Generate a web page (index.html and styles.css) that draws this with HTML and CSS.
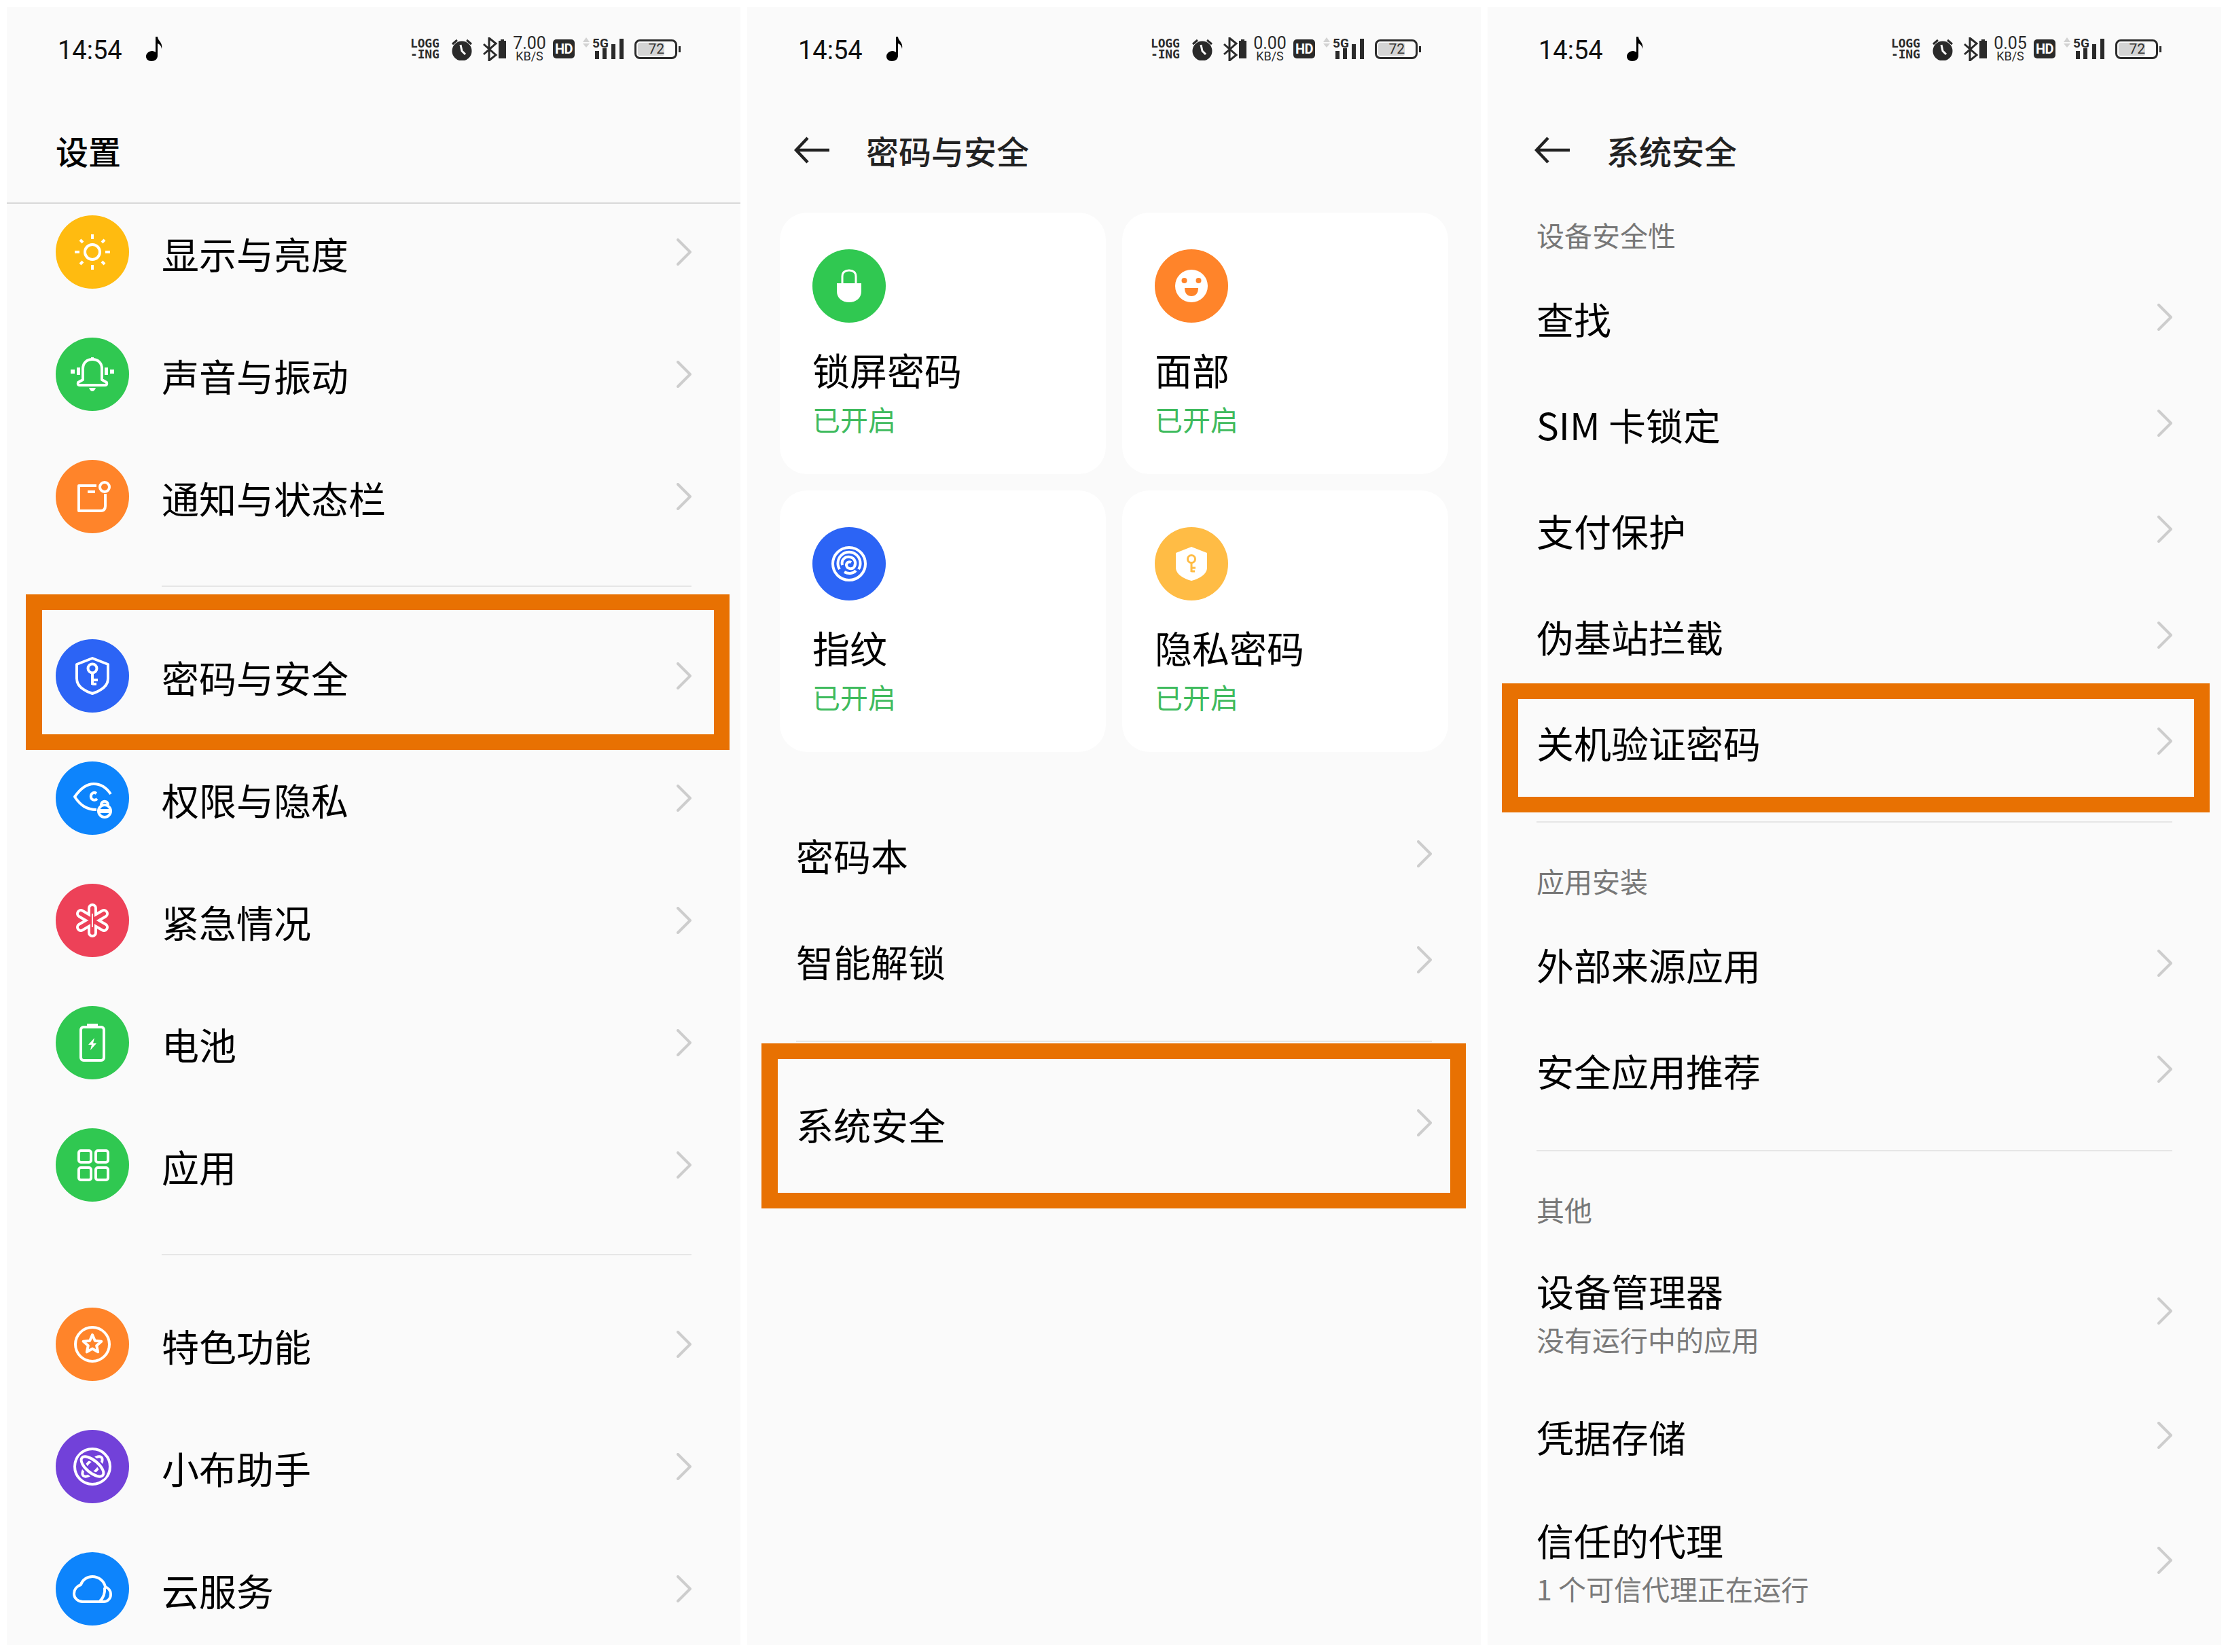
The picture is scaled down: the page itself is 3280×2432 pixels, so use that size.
FILE: index.html
```html
<!DOCTYPE html>
<html lang="zh-CN">
<head>
<meta charset="utf-8">
<title>设置</title>
<link rel="stylesheet" href="styles.css">
</head>
<body>
<svg class="sprite" aria-hidden="true">
  <symbol id="chev" viewBox="0 0 22 40"><path class="s-chev" d="M2 2 L20 20 L2 38"/></symbol>
  <symbol id="back" viewBox="0 0 52 40"><path class="s-back" d="M20 2 L3 20 L20 38 M3 20 H52"/></symbol>
  <symbol id="note" viewBox="0 0 26 36"><path class="f-black" d="M15 0 H18 C18 6 26 8 24 18 C23 13 21 11 18 10 V28 C18 33 14 36 9 36 C4 36 1 33 1 29 C1 25 5 21 10 21 C12 21 14 22 15 23 Z"/></symbol>
  <symbol id="alarm" viewBox="0 0 32 34"><circle class="f-dark" cx="16" cy="20" r="14.5"/><path class="s-dark" d="M2 10 L9 4 M30 10 L23 4"/><path class="s-white3" d="M14 11 L16 20 L21 25"/></symbol>
  <symbol id="bt" viewBox="0 0 34 35"><path class="s-dark" d="M1 10 L19 26 L9 34 V1 L19 9 L1 25"/><path class="f-dark" d="M26 3 H31 V5 H34 V31 H23 V5 H26 Z"/></symbol>
  <symbol id="sun" viewBox="0 0 108 108"><circle class="s-w" cx="54" cy="54" r="11"/><path class="s-w" d="M54 28 V35 M54 73 V80 M28 54 H35 M73 54 H80 M36 36 L40 40 M72 36 L68 40 M36 72 L40 68 M72 72 L68 68"/></symbol>
  <symbol id="bell" viewBox="0 0 108 108"><path class="s-w" d="M40 62 V46 C40 37 46 32 54 32 C62 32 68 37 68 46 V62 L75 66 Q76 70 73 70 H35 Q32 70 33 66 Z M54 29 V32"/><path class="f-w" d="M49 74 H59 Q57 79 54 79 Q51 79 49 74 Z M22 47 H28 V53 H22 Z M80 47 H86 V53 H80 Z M31 44 H36 V55 H31 Z M72 44 H77 V55 H72 Z"/></symbol>
  <symbol id="notif" viewBox="0 0 108 108"><path class="s-w" d="M60 38 H34 V75 H66 Q73 75 73 68 V50 M47 47 H58"/><circle class="s-w" cx="72" cy="40" r="7"/></symbol>
  <symbol id="shield" viewBox="0 0 108 108"><path class="s-w" d="M54 28 L77 37 V58 C77 69 66 76 54 80 C42 76 31 69 31 58 V37 Z"/><circle class="s-w" cx="54" cy="43" r="6.5"/><path class="s-w" d="M54 50 V67 M54 60 H62 M54 66 H60"/></symbol>
  <symbol id="eye" viewBox="0 0 108 108"><path class="s-w" d="M60 71 C45 71 36 64 28 52 C37 39 46 33 56 33 C67 33 75 39 81 48"/><path class="s-w" d="M60 47 C55 44 51 48 52 53 C53 57 58 58 61 55"/><circle class="s-w" cx="72" cy="73" r="9"/><path class="f-w" d="M65 70 H80 V76 H65 Z"/><path class="s-w" d="M67 64 C67 57 77 57 77 64"/></symbol>
  <symbol id="aster" viewBox="0 0 108 108"><path class="s-w14" d="M54 36 V72 M37 44 L71 64 M71 44 L37 64"/><path class="s-red6" d="M54 36 V72 M37 44 L71 64 M71 44 L37 64"/><path class="s-w3" d="M54 44 V64"/></symbol>
  <symbol id="batt" viewBox="0 0 108 108"><rect class="s-w" x="37" y="31" width="34" height="49" rx="4"/><path class="s-w" d="M46 28 H62"/><path class="f-w" d="M57 47 L48 57 H53 L51 65 L60 55 H55 Z"/></symbol>
  <symbol id="grid" viewBox="0 0 108 108"><rect class="s-w" x="34" y="33" width="18" height="17" rx="3"/><rect class="s-w" x="59" y="33" width="18" height="17" rx="3"/><rect class="s-w" x="34" y="58" width="18" height="18" rx="3"/><rect class="s-w" x="59" y="58" width="18" height="18" rx="3"/></symbol>
  <symbol id="star" viewBox="0 0 108 108"><circle class="s-w" cx="54" cy="54" r="25"/><path class="s-w" d="M54 40 L57.8 48.7 L67.3 49.7 L60.2 56 L62.2 65.3 L54 60.5 L45.8 65.3 L47.8 56 L40.7 49.7 L50.2 48.7 Z"/></symbol>
  <symbol id="orbit" viewBox="0 0 108 108"><circle class="s-w" cx="54" cy="54" r="26"/><ellipse class="s-w" cx="54" cy="54" rx="19" ry="8" transform="rotate(-45 54 54)"/><ellipse class="s-under" cx="54" cy="54" rx="20" ry="9" transform="rotate(40 54 54)"/><ellipse class="s-w" cx="54" cy="54" rx="20" ry="9" transform="rotate(40 54 54)"/></symbol>
  <symbol id="cloud" viewBox="0 0 108 108"><path class="s-w" d="M40 73 H70 C77 73 81 68 81 62 C81 57 78 53 73 51 C71 42 63 36 54 36 C46 36 39 41 37 48 C31 50 27 55 27 61 C27 68 33 73 40 73 Z M72 52 C73 60 70 68 65 72"/></symbol>
  <symbol id="lock" viewBox="0 0 108 108"><path class="f-w" d="M36 50 H72 V62 C72 72 64 78 54 78 C44 78 36 72 36 62 Z"/><path class="s-w3b" d="M44 50 V40 C44 34 48 31 54 31 C60 31 64 34 64 40 V50"/></symbol>
  <symbol id="face" viewBox="0 0 108 108"><circle class="f-w" cx="54" cy="54" r="24"/><circle class="f-orange" cx="43.5" cy="46" r="4"/><circle class="f-orange" cx="64.5" cy="46" r="4"/><path class="f-orange" d="M44 57 H64 C64 65 60 69 54 69 C48 69 44 65 44 57 Z"/></symbol>
  <symbol id="finger" viewBox="0 0 108 108"><circle class="s-w" cx="54" cy="54" r="24"/><path class="s-w" d="M40 62 A16.500 16.500 0 1 1 68 62 M47 66 C52 69 60 69 64 64"/><path class="s-w" d="M44 56 C42 48 48 43 55 44 C62 45 65 52 62 58 C59 63 51 62 50 56 C50 52 54 50 57 52"/></symbol>
  <symbol id="keyshield" viewBox="0 0 108 108"><path class="f-w" d="M54 29 L77 38 V60 C77 69 66 76 54 79 C42 76 31 69 31 60 V38 Z"/><circle class="s-amber" cx="54" cy="47" r="5.500"/><path class="s-amber" d="M54 52 V66 M54 60 H60 M54 65 H59"/></symbol>
</svg>

<main class="screens">

  <section class="panel">
    <div class="status">
      <span class="time">14:54</span>
      <svg class="note"><use href="#note"/></svg>
      <div class="sys">
        <span class="logging">LOGG<br>-ING</span>
        <svg class="alarm"><use href="#alarm"/></svg>
        <svg class="bt"><use href="#bt"/></svg>
        <span class="speed"><b>7.00</b><i>KB/S</i></span>
        <span class="hd">HD</span>
        <svg class="signal" viewBox="0 -5 60 44">
          <path class="f-grey" d="M0 7 L5 0 L10 7 Z M0 9 H10 L5 15 Z"/>
          <text class="five-g" x="14" y="15">5G</text>
          <rect class="f-dark" x="18" y="20" width="6" height="12"/>
          <rect class="f-dark" x="29" y="16" width="6" height="16"/>
          <rect class="f-dark" x="42" y="10" width="6" height="22"/>
          <rect class="f-dark" x="54" y="2" width="6" height="30"/>
        </svg>
        <span class="battery"><span class="level">72</span></span>
      </div>
    </div>
    <header class="titlebar"><h1 class="title root">设置</h1></header>
    <div class="list-clip">
      <div class="list">
        <div class="row"><span class="ic yellow"><svg><use href="#sun"/></svg></span><span class="label">显示与亮度</span><svg class="chev"><use href="#chev"/></svg></div>
        <div class="row"><span class="ic green"><svg><use href="#bell"/></svg></span><span class="label">声音与振动</span><svg class="chev"><use href="#chev"/></svg></div>
        <div class="row"><span class="ic orange"><svg><use href="#notif"/></svg></span><span class="label">通知与状态栏</span><svg class="chev"><use href="#chev"/></svg></div>
        <div class="sep sep-indent"></div>
        <div class="row"><span class="ic blue"><svg><use href="#shield"/></svg></span><span class="label">密码与安全</span><svg class="chev"><use href="#chev"/></svg><span class="hl hl-settings"></span></div>
        <div class="row"><span class="ic sky"><svg><use href="#eye"/></svg></span><span class="label">权限与隐私</span><svg class="chev"><use href="#chev"/></svg></div>
        <div class="row"><span class="ic red"><svg><use href="#aster"/></svg></span><span class="label">紧急情况</span><svg class="chev"><use href="#chev"/></svg></div>
        <div class="row"><span class="ic green"><svg><use href="#batt"/></svg></span><span class="label">电池</span><svg class="chev"><use href="#chev"/></svg></div>
        <div class="row"><span class="ic green"><svg><use href="#grid"/></svg></span><span class="label">应用</span><svg class="chev"><use href="#chev"/></svg></div>
        <div class="sep sep-indent"></div>
        <div class="row"><span class="ic orange"><svg><use href="#star"/></svg></span><span class="label">特色功能</span><svg class="chev"><use href="#chev"/></svg></div>
        <div class="row"><span class="ic purple"><svg><use href="#orbit"/></svg></span><span class="label">小布助手</span><svg class="chev"><use href="#chev"/></svg></div>
        <div class="row"><span class="ic sky"><svg><use href="#cloud"/></svg></span><span class="label">云服务</span><svg class="chev"><use href="#chev"/></svg></div>
      </div>
    </div>
  </section>

  <section class="panel">
    <div class="status">
      <span class="time">14:54</span>
      <svg class="note"><use href="#note"/></svg>
      <div class="sys">
        <span class="logging">LOGG<br>-ING</span>
        <svg class="alarm"><use href="#alarm"/></svg>
        <svg class="bt"><use href="#bt"/></svg>
        <span class="speed"><b>0.00</b><i>KB/S</i></span>
        <span class="hd">HD</span>
        <svg class="signal" viewBox="0 -5 60 44">
          <path class="f-grey" d="M0 7 L5 0 L10 7 Z M0 9 H10 L5 15 Z"/>
          <text class="five-g" x="14" y="15">5G</text>
          <rect class="f-dark" x="18" y="20" width="6" height="12"/>
          <rect class="f-dark" x="29" y="16" width="6" height="16"/>
          <rect class="f-dark" x="42" y="10" width="6" height="22"/>
          <rect class="f-dark" x="54" y="2" width="6" height="30"/>
        </svg>
        <span class="battery"><span class="level">72</span></span>
      </div>
    </div>
    <header class="titlebar"><svg class="back"><use href="#back"/></svg><h1 class="title">密码与安全</h1></header>
    <div class="cards">
      <div class="card"><span class="ic green"><svg><use href="#lock"/></svg></span><span class="card-title">锁屏密码</span><span class="card-sub">已开启</span></div>
      <div class="card"><span class="ic orange"><svg><use href="#face"/></svg></span><span class="card-title">面部</span><span class="card-sub">已开启</span></div>
      <div class="card"><span class="ic blue"><svg><use href="#finger"/></svg></span><span class="card-title">指纹</span><span class="card-sub">已开启</span></div>
      <div class="card"><span class="ic amber"><svg><use href="#keyshield"/></svg></span><span class="card-title">隐私密码</span><span class="card-sub">已开启</span></div>
    </div>
    <div class="row compact"><span class="label">密码本</span><svg class="chev"><use href="#chev"/></svg></div>
    <div class="row compact"><span class="label">智能解锁</span><svg class="chev"><use href="#chev"/></svg></div>
    <div class="sep"></div>
    <div class="row compact"><span class="label">系统安全</span><svg class="chev"><use href="#chev"/></svg><span class="hl hl-password"></span></div>
  </section>

  <section class="panel">
    <div class="status">
      <span class="time">14:54</span>
      <svg class="note"><use href="#note"/></svg>
      <div class="sys">
        <span class="logging">LOGG<br>-ING</span>
        <svg class="alarm"><use href="#alarm"/></svg>
        <svg class="bt"><use href="#bt"/></svg>
        <span class="speed"><b>0.05</b><i>KB/S</i></span>
        <span class="hd">HD</span>
        <svg class="signal" viewBox="0 -5 60 44">
          <path class="f-grey" d="M0 7 L5 0 L10 7 Z M0 9 H10 L5 15 Z"/>
          <text class="five-g" x="14" y="15">5G</text>
          <rect class="f-dark" x="18" y="20" width="6" height="12"/>
          <rect class="f-dark" x="29" y="16" width="6" height="16"/>
          <rect class="f-dark" x="42" y="10" width="6" height="22"/>
          <rect class="f-dark" x="54" y="2" width="6" height="30"/>
        </svg>
        <span class="battery"><span class="level">72</span></span>
      </div>
    </div>
    <header class="titlebar"><svg class="back"><use href="#back"/></svg><h1 class="title">系统安全</h1></header>
    <div class="section-label first">设备安全性</div>
    <div class="row compact"><span class="label">查找</span><svg class="chev"><use href="#chev"/></svg></div>
    <div class="row compact"><span class="label">SIM 卡锁定</span><svg class="chev"><use href="#chev"/></svg></div>
    <div class="row compact"><span class="label">支付保护</span><svg class="chev"><use href="#chev"/></svg></div>
    <div class="row compact"><span class="label">伪基站拦截</span><svg class="chev"><use href="#chev"/></svg></div>
    <div class="row compact"><span class="label">关机验证密码</span><svg class="chev"><use href="#chev"/></svg><span class="hl hl-system"></span></div>
    <div class="sep sep-section"></div>
    <div class="section-label">应用安装</div>
    <div class="row compact"><span class="label">外部来源应用</span><svg class="chev"><use href="#chev"/></svg></div>
    <div class="row compact"><span class="label">安全应用推荐</span><svg class="chev"><use href="#chev"/></svg></div>
    <div class="sep sep-section sep-last"></div>
    <div class="section-label">其他</div>
    <div class="row two-line"><span class="stack"><span class="label">设备管理器</span><span class="sub">没有运行中的应用</span></span><svg class="chev"><use href="#chev"/></svg></div>
    <div class="row compact"><span class="label">凭据存储</span><svg class="chev"><use href="#chev"/></svg></div>
    <div class="row two-line"><span class="stack"><span class="label">信任的代理</span><span class="sub">1 个可信代理正在运行</span></span><svg class="chev"><use href="#chev"/></svg></div>
  </section>

</main>
</body>
</html>
```
FILE: styles.css
```css
* { box-sizing: border-box; }
html, body { margin: 0; padding: 0; background: #fff; }
body {
  width: 3280px;
  height: 2432px;
  overflow: hidden;
  font-family: "Noto Sans CJK SC", "Noto Sans", Roboto, sans-serif;
  color: #000;
}
.sprite { position: absolute; width: 0; height: 0; overflow: hidden; }

.screens { display: flex; gap: 10px; padding: 10px; }
.panel {
  width: 1080px;
  height: 2412px;
  background: #fafafa;
  overflow: hidden;
  display: flex;
  flex-direction: column;
  flex: none;
}

/* status bar */
.status {
  height: 124px;
  flex: none;
  display: flex;
  align-items: center;
  padding: 0 89px 0 75px;
}
.time { font: 400 38px/44px Roboto, sans-serif; color: #111; width: 129px; padding-top: 3px; flex: none; }
.note { width: 26px; height: 36px; flex: none; }
.sys { margin-left: auto; display: flex; align-items: center; }
.logging {
  width: 43px;
  font: 700 18px/16px "DejaVu Sans Mono", monospace;
  color: #2a2a2a;
  margin-right: 17px;
  letter-spacing: -0.2px;
  white-space: nowrap;
}
.alarm { width: 32px; height: 34px; margin-right: 15px; flex: none; }
.bt { width: 34px; height: 35px; margin-right: 11px; flex: none; }
.speed {
  width: 47px;
  margin-right: 11px;
  display: flex;
  flex-direction: column;
  align-items: center;
  font-family: Roboto, sans-serif;
  color: #2a2a2a;
  white-space: nowrap;
}
.speed b { font: 400 25px/20px Roboto, sans-serif; }
.speed i { font: 400 18px/16px Roboto, sans-serif; margin-top: 1px; }
.hd {
  width: 32px;
  height: 28px;
  background: #2a2a2a;
  border-radius: 5px;
  color: #fff;
  font: 700 20px/28px Roboto, sans-serif;
  text-align: center;
  margin-right: 12px;
  letter-spacing: -0.5px;
}
.signal { width: 60px; height: 44px; margin-right: 16px; flex: none; }
.five-g { font: 700 19px Roboto, sans-serif; fill: #2a2a2a; }
.battery {
  position: relative;
  width: 63px;
  height: 29px;
  border: 3px solid #2a2a2a;
  border-radius: 8px;
  margin-right: 4px;
  padding: 2px;
  flex: none;
}
.battery::after {
  content: "";
  position: absolute;
  right: -8px;
  top: 7px;
  width: 3px;
  height: 9px;
  background: #2a2a2a;
}
.level {
  display: block;
  width: 39px;
  height: 19px;
  background: #d4d4d4;
  border-radius: 3px;
  font: 400 21px/19px Roboto, sans-serif;
  color: #333;
  text-align: right;
}

/* title bar */
.titlebar {
  height: 164px;
  flex: none;
  padding: 10px 0 0 69px;
  display: flex;
  align-items: center;
}
.title { margin: 0; font-size: 48px; line-height: 60px; font-weight: 500; color: #222; }
.title.root { color: #000; margin-left: 3px; }
.back { width: 52px; height: 40px; margin-right: 54px; flex: none; }

/* rows */
.list-clip { flex: 1; overflow: hidden; border-top: 2px solid #d8d8d8; }
.list { margin-top: -19px; }
.row {
  position: relative;
  height: 180px;
  flex: none;
  display: flex;
  align-items: center;
  padding: 0 72px;
}
.row.compact { height: 156px; }
.row.two-line { height: 211px; }
.label { font-size: 55px; line-height: 72px; padding-top: 2px; white-space: nowrap; }
.ic + .label { margin-left: 48px; }
.chev { width: 22px; height: 40px; margin-left: auto; flex: none; }
.stack { display: flex; flex-direction: column; padding-top: 9px; }
.sub { font-size: 41px; line-height: 72px; color: #7a7a7a; white-space: nowrap; }

.ic { width: 108px; height: 108px; border-radius: 50%; flex: none; display: block; }
.ic svg { width: 108px; height: 108px; display: block; }
.yellow { background: #ffbb10; }
.green { background: #30c851; }
.orange { background: #ff842a; }
.blue { background: #2c64f5; }
.sky { background: #0d84fc; }
.red { background: #ed4158; }
.purple { background: #7241d9; }
.amber { background: #ffbc45; }

.sep { height: 2px; background: #e6e6e6; margin: 41px 72px 41px; flex: none; }
.sep-indent { margin-left: 228px; }
.sep-section { margin-top: 40px; margin-bottom: 44px; }
.sep-last { margin-top: 41px; }

.section-label {
  height: 85px;
  line-height: 83px;
  padding-left: 72px;
  font-size: 41px;
  color: #777;
  flex: none;
}
.section-label.first { margin-top: 6px; }

/* highlight frames */
.hl { position: absolute; border: 23px solid #e87102; border-left-width: 24px; }
.hl-settings { top: -30px; bottom: -19px; left: 28px; right: 16px; }
.hl-password { top: -39px; bottom: -48px; left: 21px; right: 22px; }
.hl-system { top: -7px; bottom: -27px; left: 21px; right: 17px; }

/* cards */
.cards {
  display: grid;
  grid-template-columns: 480px 480px;
  grid-auto-rows: 385px;
  gap: 24px;
  margin: 15px 48px 72px;
  flex: none;
}
.card {
  background: #fff;
  border-radius: 40px;
  padding: 54px 48px 0;
  display: flex;
  flex-direction: column;
}
.card-title { font-size: 55px; line-height: 72px; margin-top: 32px; }
.card-sub { font-size: 41px; line-height: 74px; color: #3fbb5e; }

/* svg paint */
.s-chev { fill: none; stroke: #cdcdcd; stroke-width: 4; stroke-linecap: round; stroke-linejoin: round; }
.s-back { fill: none; stroke: #222; stroke-width: 4.500; }
.f-black { fill: #000; }
.f-dark { fill: #2a2a2a; }
.f-grey { fill: #d2d2d2; }
.f-w { fill: #fff; }
.f-orange { fill: #ff842a; }
.s-dark { fill: none; stroke: #2a2a2a; stroke-width: 3; }
.s-white3 { fill: none; stroke: #fff; stroke-width: 3; }
.s-w { fill: none; stroke: #fff; stroke-width: 4; stroke-linejoin: round; }
.s-w3b { fill: none; stroke: #fff; stroke-width: 3; }
.s-under { fill: none; stroke: #7241d9; stroke-width: 9; }
.s-w14 { fill: none; stroke: #fff; stroke-width: 14; stroke-linecap: round; }
.s-red6 { fill: none; stroke: #ed4158; stroke-width: 6; stroke-linecap: round; }
.s-w3 { fill: none; stroke: #fff; stroke-width: 2; }
.s-amber { fill: none; stroke: #ffbc45; stroke-width: 3; }
```
